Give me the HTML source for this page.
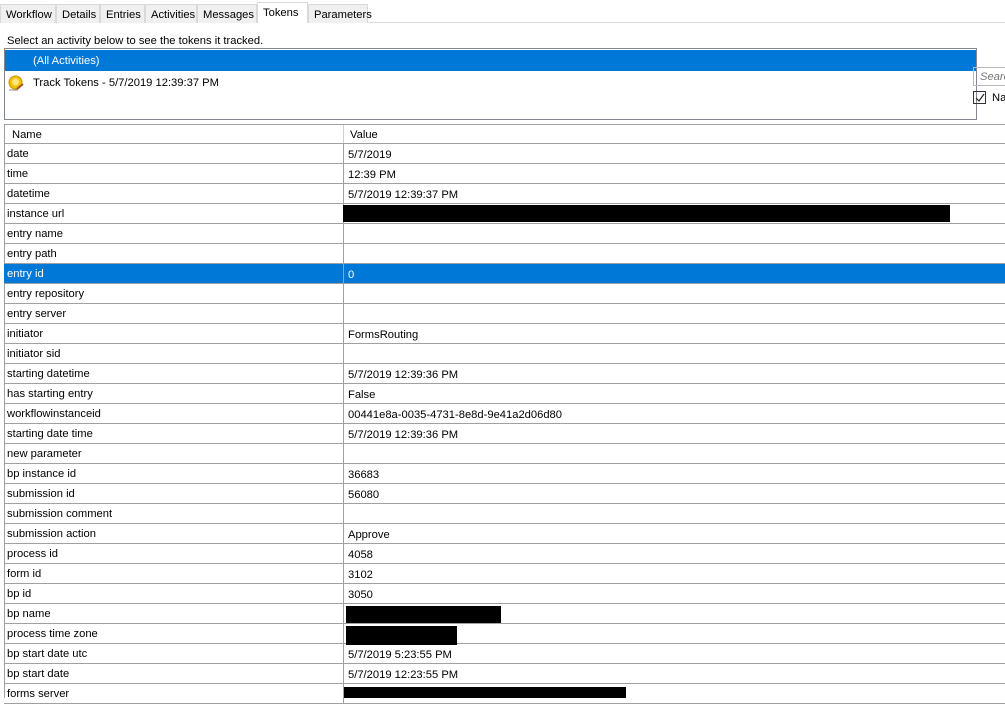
<!DOCTYPE html>
<html><head><style>
*{margin:0;padding:0;box-sizing:border-box}
body{width:1005px;height:698px;overflow:hidden;background:#fff;font-family:"Liberation Sans",sans-serif;font-size:11.2px;color:#000;position:relative}
.a{position:absolute;white-space:nowrap}
.tab{position:absolute;top:4px;height:19px;border:1px solid #d9d9d9;border-bottom:none;background:#f0f0f0;padding:4px 0 0 5px}
.row{position:absolute;left:4px;width:1001px;height:20px;border-bottom:1px solid #a0a0a0}
.row .n{position:absolute;left:3px;top:4px}
.row .v{position:absolute;left:339px;top:0;height:19px;border-left:1px solid #a0a0a0;width:700px}
.row .v span{position:absolute;left:4px;top:5px}
.sel{background:#0078d7;color:#fff}
.blk{position:absolute;background:#000}
</style></head><body>
<div class="a" style="left:0;top:22px;width:1005px;height:1px;background:#d9d9d9"></div>
<div class="tab" style="left:0;width:56px">Workflow</div>
<div class="tab" style="left:56px;width:44px">Details</div>
<div class="tab" style="left:100px;width:45px">Entries</div>
<div class="tab" style="left:145px;width:52px">Activities</div>
<div class="tab" style="left:197px;width:60px">Messages</div>
<div class="tab" style="left:257px;top:2px;height:21px;width:51px;background:#fff;padding-top:4px">Tokens</div>
<div class="tab" style="left:308px;width:60px">Parameters</div>
<div class="a" style="left:7px;top:35px">Select an activity below to see the tokens it tracked.</div>
<div class="a" style="left:4px;top:48px;width:973px;height:72px;border:1px solid #828790"></div>
<div class="a sel" style="left:5px;top:50px;width:971px;height:21px"><span class="a" style="left:28px;top:5px">(All Activities)</span></div>
<svg class="a" style="left:8px;top:75px" width="16" height="16" viewBox="0 0 16 16"><circle cx="7.5" cy="7.5" r="6.5" fill="#f2c200" stroke="#c89400"/><circle cx="7.5" cy="7" r="3.5" fill="#ffe680"/><path d="M9 14 L15 9" stroke="#a0522d" stroke-width="2"/><path d="M1 15 H10" stroke="#888"/></svg>
<div class="a" style="left:33px;top:77px">Track Tokens - 5/7/2019 12:39:37 PM</div>
<div class="a" style="left:973px;top:67px;width:40px;height:19px;border:1px solid #bbb;color:#777;font-style:italic;padding:3px 0 0 6px">Search</div>
<div class="a" style="left:973px;top:91px;width:13px;height:13px;border:1px solid #333"></div>
<svg class="a" style="left:975px;top:93px" width="10" height="10"><path d="M1 5 L4 8 L9 1" stroke="#222" fill="none" stroke-width="1.2"/></svg>
<div class="a" style="left:992px;top:92px">Na</div>
<div class="a" style="left:4px;top:124px;width:1001px;height:1px;background:#a0a0a0"></div>
<div class="a" style="left:4px;top:124px;width:1px;height:574px;background:#a0a0a0"></div>
<div class="row" style="top:125px;height:19px"><span class="n" style="left:8px;top:4px">Name</span><div class="v" style="border-left:1px solid #d0d0d0;height:18px"><span style="top:4px;left:6px">Value</span></div></div>
<div id="rows"></div>
<script>
var d=[["date","5/7/2019"],["time","12:39 PM"],["datetime","5/7/2019 12:39:37 PM"],["instance url",""],["entry name",""],["entry path",""],["entry id","0"],["entry repository",""],["entry server",""],["initiator","FormsRouting"],["initiator sid",""],["starting datetime","5/7/2019 12:39:36 PM"],["has starting entry","False"],["workflowinstanceid","00441e8a-0035-4731-8e8d-9e41a2d06d80"],["starting date time","5/7/2019 12:39:36 PM"],["new parameter",""],["bp instance id","36683"],["submission id","56080"],["submission comment",""],["submission action","Approve"],["process id","4058"],["form id","3102"],["bp id","3050"],["bp name",""],["process time zone",""],["bp start date utc","5/7/2019 5:23:55 PM"],["bp start date","5/7/2019 12:23:55 PM"],["forms server",""]];
var h="";d.forEach(function(r,i){var t=144+i*20;h+='<div class="row'+(r[0]=="entry id"?' sel':'')+'" style="top:'+t+'px"><span class="n">'+r[0]+'</span><div class="v"><span>'+r[1]+'</span></div></div>';});
document.getElementById("rows").innerHTML=h;
</script>
<div class="blk" style="left:343px;top:205px;width:607px;height:17px"></div>
<div class="blk" style="left:346px;top:606px;width:155px;height:17px"></div>
<div class="blk" style="left:346px;top:626px;width:111px;height:19px"></div>
<div class="blk" style="left:344px;top:687px;width:282px;height:11px"></div>
</body></html>
